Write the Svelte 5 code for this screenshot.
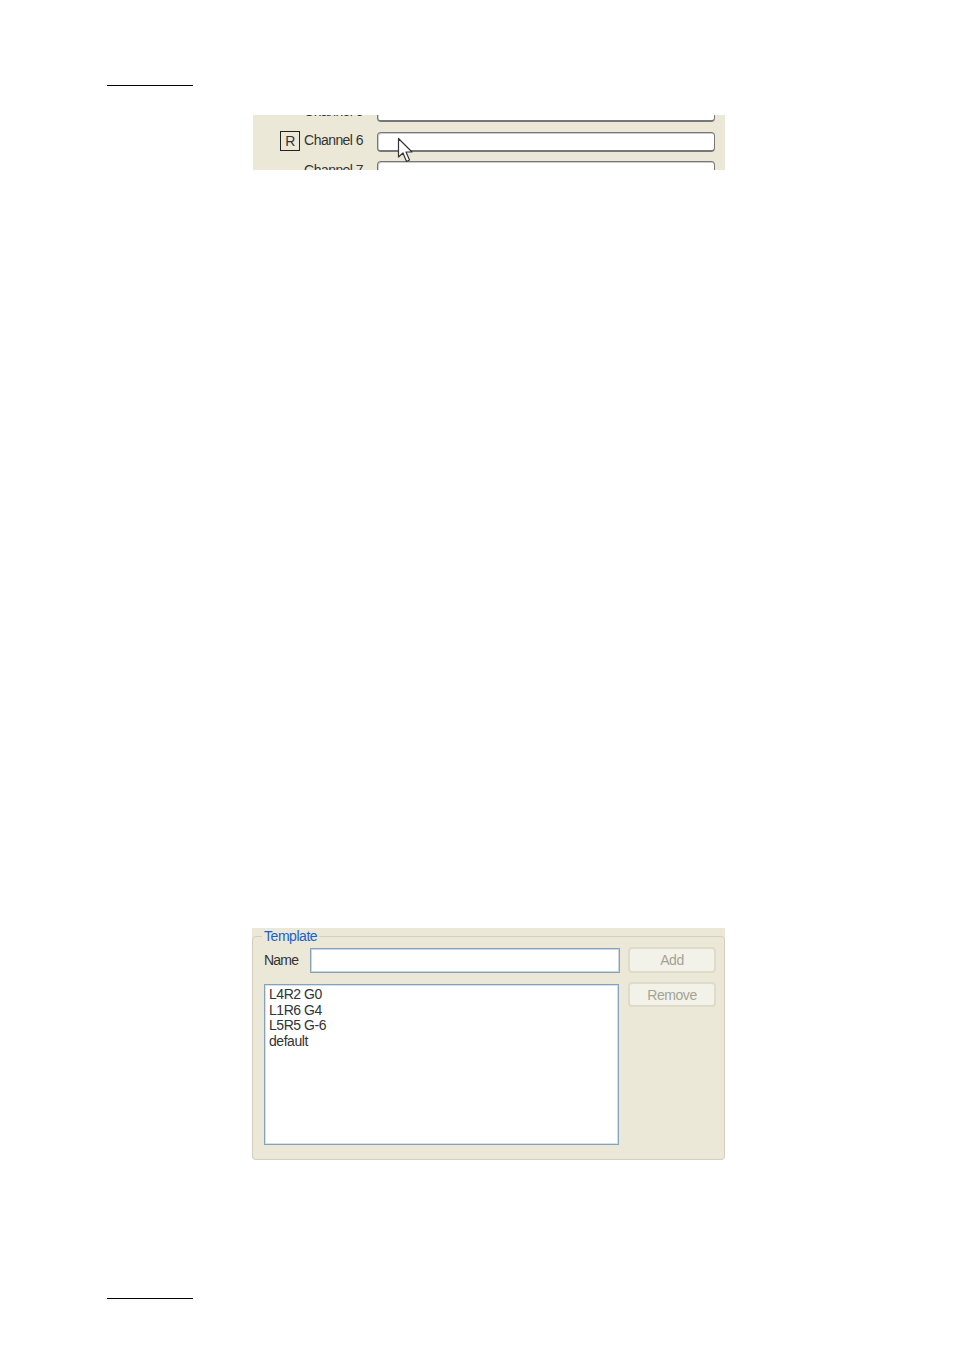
<script>
  const channels = ["Channel 5", "Channel 6", "Channel 7"];
  const templates = ["L4R2 G0", "L1R6 G4", "L5R5 G-6", "default"];
</script>

<div class="page">
  <hr class="rule" />

  <div class="channels">
    <div class="rows">
      {#each channels as name}
        <div class="row">
          {#if name === "Channel 6"}<span class="key">R</span>{/if}
          <span class="label">{name}</span>
          <div class="field"></div>
        </div>
      {/each}
    </div>
    <svg class="cursor" width="17" height="26" viewBox="0 0 17 26">
      <path d="M1.5 1.5V20L6 16L9.5 24.5L12.5 23L9 15H15Z" fill="#fff" stroke="#333" stroke-width="1.2" stroke-linejoin="round" />
    </svg>
  </div>

  <div class="panel">
    <fieldset>
      <legend>Template</legend>
      <div class="name-row">
        <span class="name">Name</span>
        <div class="input"></div>
        <button disabled>Add</button>
      </div>
      <div class="list-row">
        <ul>
          {#each templates as t}
            <li>{t}</li>
          {/each}
        </ul>
        <button disabled>Remove</button>
      </div>
    </fieldset>
  </div>

  <hr class="rule bottom" />
</div>

<style>
  :global(body) {
    margin: 0;
    background: #fff;
  }

  .page {
    height: 1350px;
    padding-top: 85px;
    box-sizing: border-box;
    font-family: "Liberation Sans", Arial, sans-serif;
    font-size: 14px;
    letter-spacing: -0.45px;
    color: #333;
  }

  .rule {
    width: 86px;
    height: 1px;
    margin: 0 0 0 107px;
    border: none;
    background: #000;
  }

  .rule.bottom {
    margin-top: 138px;
  }

  .channels {
    position: relative;
    width: 472px;
    height: 55px;
    margin: 29px 0 0 253px;
    overflow: hidden;
    background: #ebe8d8;
  }

  .rows {
    display: flex;
    flex-direction: column;
    gap: 9.5px;
    margin-top: -13px;
  }

  .row {
    display: flex;
    align-items: center;
    justify-content: flex-end;
    height: 20px;
    padding-right: 10px;
  }

  .key {
    box-sizing: border-box;
    width: 20px;
    height: 20px;
    margin: 0 4px 1px 0;
    border: 1px solid #222;
    text-align: center;
    line-height: 19px;
  }

  .label {
    margin: 0 14px 3px 0;
    letter-spacing: -0.55px;
  }

  .field {
    box-sizing: border-box;
    width: 338px;
    height: 20px;
    background: #fff;
    border: 1px solid #777;
    border-bottom-width: 2px;
    border-radius: 4px;
    box-shadow: inset 1px 1px 0 #ccc;
  }

  .cursor {
    position: absolute;
    left: 144px;
    top: 22px;
  }

  .panel {
    width: 473px;
    height: 232px;
    margin: 758px 0 0 252px;
    background: #ebe8d8;
    border-radius: 0 0 4px 4px;
  }

  fieldset {
    box-sizing: border-box;
    height: 232px;
    margin: 0;
    padding: 3px 8px 0 11px;
    border: 1px solid #d3d0bd;
    border-radius: 4px;
  }

  legend {
    margin-left: -2px;
    padding: 0 2px;
    color: #1a5fd0;
    line-height: 16px;
  }

  .name-row {
    display: flex;
    align-items: center;
    height: 26px;
  }

  .name {
    width: 46px;
    letter-spacing: -0.8px;
  }

  .input {
    box-sizing: border-box;
    width: 310px;
    height: 25px;
    background: #fff;
    border: 1px solid #86a1bd;
    box-shadow: inset 0 0 0 1px #c9d7e5;
  }

  button {
    box-sizing: border-box;
    width: 88px;
    height: 26px;
    margin-left: 8px;
    padding: 0;
    background: #f3f2e9;
    border: 2px solid #dedbcb;
    border-radius: 4px;
    color: #a5a394;
    font: inherit;
    letter-spacing: inherit;
  }

  .list-row {
    display: flex;
    align-items: flex-start;
    margin-top: 9px;
  }

  .list-row button {
    height: 25px;
    margin-left: 9px;
  }

  ul {
    box-sizing: border-box;
    width: 355px;
    height: 161px;
    margin: 2px 0 0;
    padding: 2px 0 0 4px;
    list-style: none;
    background: #fff;
    border: 1px solid #86a1bd;
    box-shadow: inset 0 0 0 1px #d5e0ea;
    line-height: 15.6px;
  }
</style>
